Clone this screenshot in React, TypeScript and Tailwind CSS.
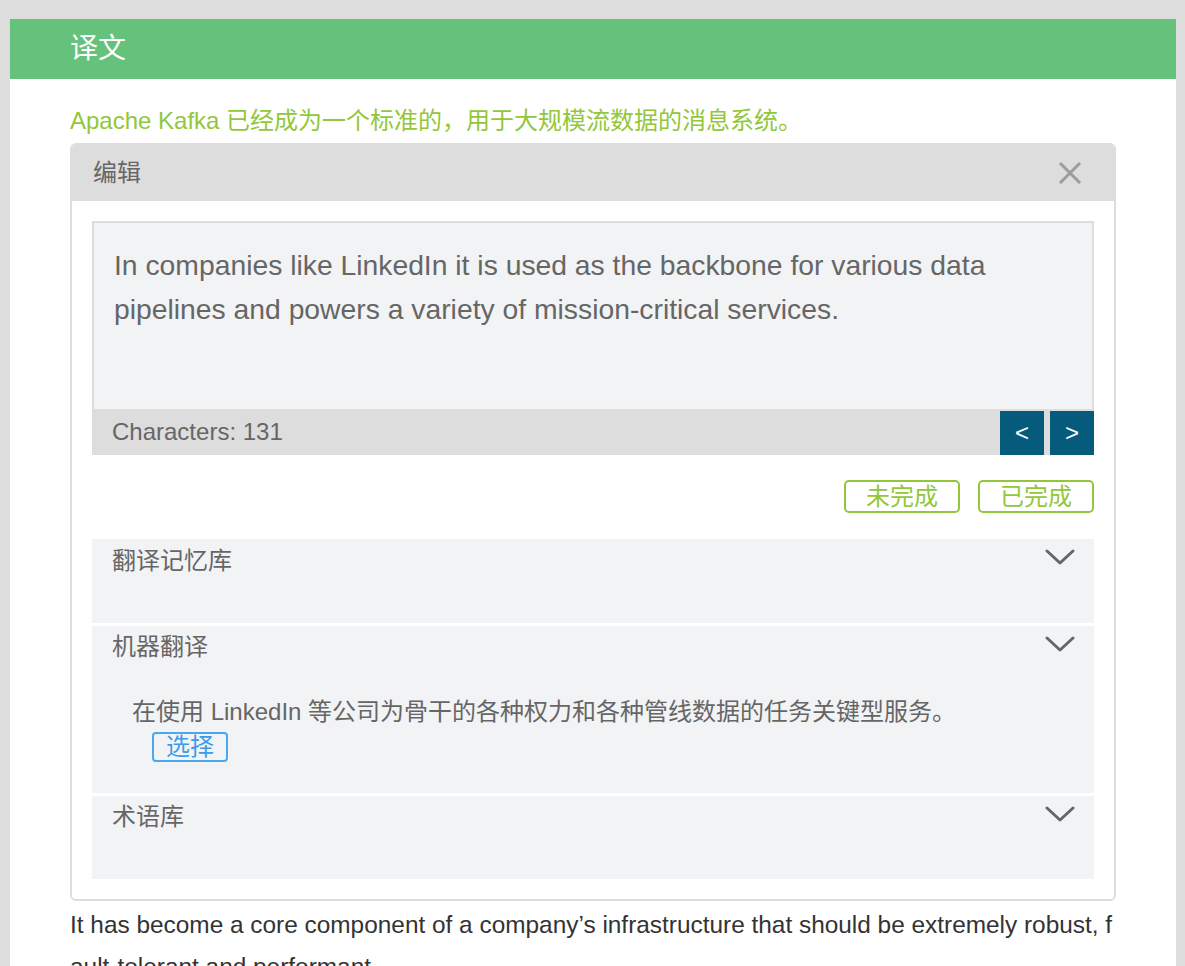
import React from "react";

const FONT = '"Liberation Sans", "Noto Sans CJK SC", Arial, sans-serif';

function Chevron() {
  return (
    <svg width="30" height="17" viewBox="0 0 30 17" className="absolute top-[10px] right-[19px]">
      <polyline points="2,2 15,14 28,2" fill="none" stroke="#666666" strokeWidth="3" strokeLinecap="round" strokeLinejoin="round" />
    </svg>
  );
}

export default function App() {
  return (
    <div className="min-h-screen bg-[#dddddd] pt-[19px] pl-[10px] pr-[9px]" style={{ fontFamily: FONT }}>
      <div className="bg-white min-h-[1000px]">
        <div className="h-[60px] bg-[#65c27c] pl-[60px] flex items-center">
          <span className="text-white text-[28px] leading-none">译文</span>
        </div>
        <div className="px-[60px] pt-[24px]">
          <div className="text-[24px] leading-[36px] text-[#92c73a]">
            Apache Kafka 已经成为一个标准的，用于大规模流数据的消息系统。
          </div>
          <div className="mt-[4px] border-2 border-[#dddddd] rounded-[6px] overflow-hidden">
            <div className="h-[56px] bg-[#dddddd] flex items-center justify-between pl-[21px] pr-[32px]">
              <span className="text-[24px] leading-none text-[#666666]">编辑</span>
              <svg width="24" height="24" viewBox="0 0 24 24">
                <line x1="2" y1="2" x2="22" y2="22" stroke="#9c9c9c" strokeWidth="3" />
                <line x1="22" y1="2" x2="2" y2="22" stroke="#9c9c9c" strokeWidth="3" />
              </svg>
            </div>
            <div className="p-[20px] bg-white">
              <div className="h-[188px] bg-[#f2f3f5] border-2 border-b-0 border-[#dddddd] pl-[20px] pt-[20px] text-[28.3px] leading-[44px] text-[#666666]">
                In companies like LinkedIn it is used as the backbone for various data
                <br />
                pipelines and powers a variety of mission-critical services.
              </div>
              <div className="h-[46px] bg-[#dddddd] flex justify-between">
                <span className="self-center pl-[20px] text-[24px] leading-none text-[#666666]">Characters: 131</span>
                <div className="self-end flex gap-[6px]">
                  <div className="w-[44px] h-[44px] bg-[#065a7b] text-white text-[24px] flex items-center justify-center">&lt;</div>
                  <div className="w-[44px] h-[44px] bg-[#065a7b] text-white text-[24px] flex items-center justify-center">&gt;</div>
                </div>
              </div>
              <div className="mt-[25px] flex justify-end gap-[18px]">
                <div className="border-2 border-[#92c73a] rounded-[5px] px-[20px] text-[24px] leading-[29px] text-[#92c73a]">未完成</div>
                <div className="border-2 border-[#92c73a] rounded-[5px] px-[20px] text-[24px] leading-[29px] text-[#92c73a]">已完成</div>
              </div>
              <div className="mt-[26px] flex flex-col gap-[3px]">
                <div className="relative h-[84px] bg-[#f2f3f5]">
                  <div className="pl-[20px] pt-[6px] text-[24px] leading-[32px] text-[#666666]">翻译记忆库</div>
                  <Chevron />
                </div>
                <div className="relative h-[167px] bg-[#f2f3f5]">
                  <div className="pl-[20px] pt-[5px] text-[24px] leading-[32px] text-[#666666]">机器翻译</div>
                  <Chevron />
                  <div className="pl-[40px] mt-[33px] text-[24px] leading-[32px] text-[#666666]">
                    在使用 LinkedIn 等公司为骨干的各种权力和各种管线数据的任务关键型服务。
                  </div>
                  <div className="pl-[60px] mt-[4px]">
                    <span className="inline-block border-2 border-[#4aa8ee] rounded-[4px] px-[12px] text-[24px] leading-[26px] text-[#3d9be9]">选择</span>
                  </div>
                </div>
                <div className="relative h-[83px] bg-[#f2f3f5]">
                  <div className="pl-[20px] pt-[5px] text-[24px] leading-[32px] text-[#666666]">术语库</div>
                  <Chevron />
                </div>
              </div>
            </div>
          </div>
          <div className="mt-[3px] text-[24.4px] leading-[42px] text-[#333333] whitespace-nowrap">
            <div>It has become a core component of a company’s infrastructure that should be extremely robust, f</div>
            <div>ault-tolerant and performant.</div>
          </div>
        </div>
      </div>
    </div>
  );
}
